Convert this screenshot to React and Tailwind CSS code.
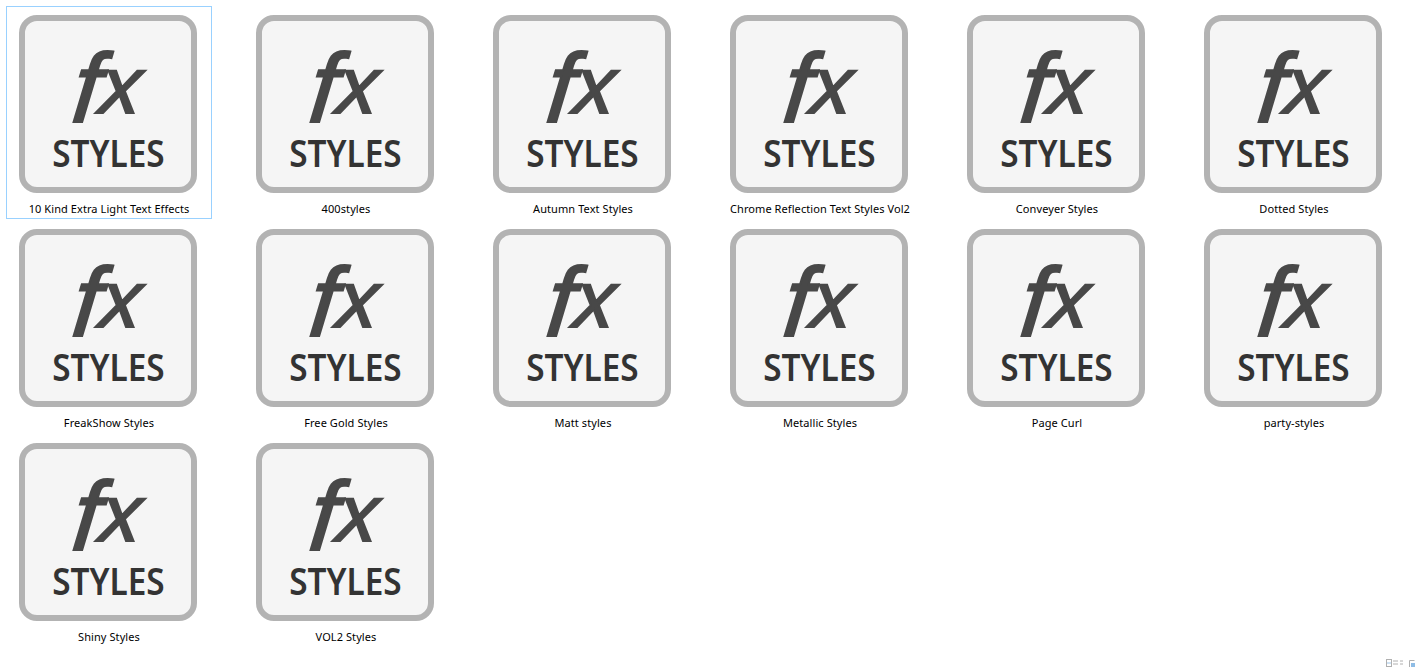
const names = [
  "10 Kind Extra Light Text Effects", "400styles", "Autumn Text Styles", "Chrome Reflection Text Styles Vol2", "Conveyer Styles", "Dotted Styles",
  "FreakShow Styles", "Free Gold Styles", "Matt styles", "Metallic Styles", "Page Curl", "party-styles",
  "Shiny Styles", "VOL2 Styles",
];

function Tile({ name, selected }) {
  return (
    <div className={`h-[213px] w-[206px] flex flex-col items-center border pt-[8px] ${selected ? "border-[#99d1ff]" : "border-transparent"}`}>
      <div className="mr-[2px] h-[178px] w-[178px] rounded-[18px] border-[6px] border-[#b3b3b3] bg-[#f5f5f5] flex flex-col items-center overflow-hidden">
        <div className="h-[84px] mt-[23px] leading-[84px] whitespace-nowrap italic text-[#484848] -skew-x-[6deg] [-webkit-text-stroke:2px_#484848] font-['Liberation_Sans',sans-serif]">
          <span className="text-[98px] font-normal">f</span>
          <span className="text-[80px] font-normal align-[9px]">x</span>
        </div>
        <div className="mt-[3px] text-[37px] leading-[44px] font-semibold text-[#333333] scale-x-90 font-['Noto_Sans','Open_Sans',sans-serif]">STYLES</div>
      </div>
      <div className="mt-[8px] text-[11px] leading-[16px] text-black whitespace-nowrap tracking-[0.08px] font-['Noto_Sans','Open_Sans',sans-serif]">{name}</div>
    </div>
  );
}

export default function App() {
  return (
    <div className="relative h-[667px] w-[1415px] bg-white overflow-hidden">
      <div className="grid grid-cols-[repeat(6,206px)] gap-x-[31px] gap-y-[1px] pl-[6px] pt-[6px]">
        {names.map((n, i) => <Tile key={n} name={n} selected={i === 0} />)}
      </div>
      <svg className="absolute right-0 bottom-0" width="29" height="8" viewBox="0 0 29 8" fill="none">
        <rect x="0.5" y="0.5" width="5" height="7" stroke="#b0b0b0" />
        <path d="M1 4h4" stroke="#9cc4e8" />
        <path d="M7 2h5M14 2h3M7 5h5M14 5h3" stroke="#b0b0b0" />
        <path d="M23.5 8V1.5h5" stroke="#b0b0b0" />
        <rect x="25" y="4" width="4" height="4" fill="#8fbde6" />
      </svg>
    </div>
  );
}
